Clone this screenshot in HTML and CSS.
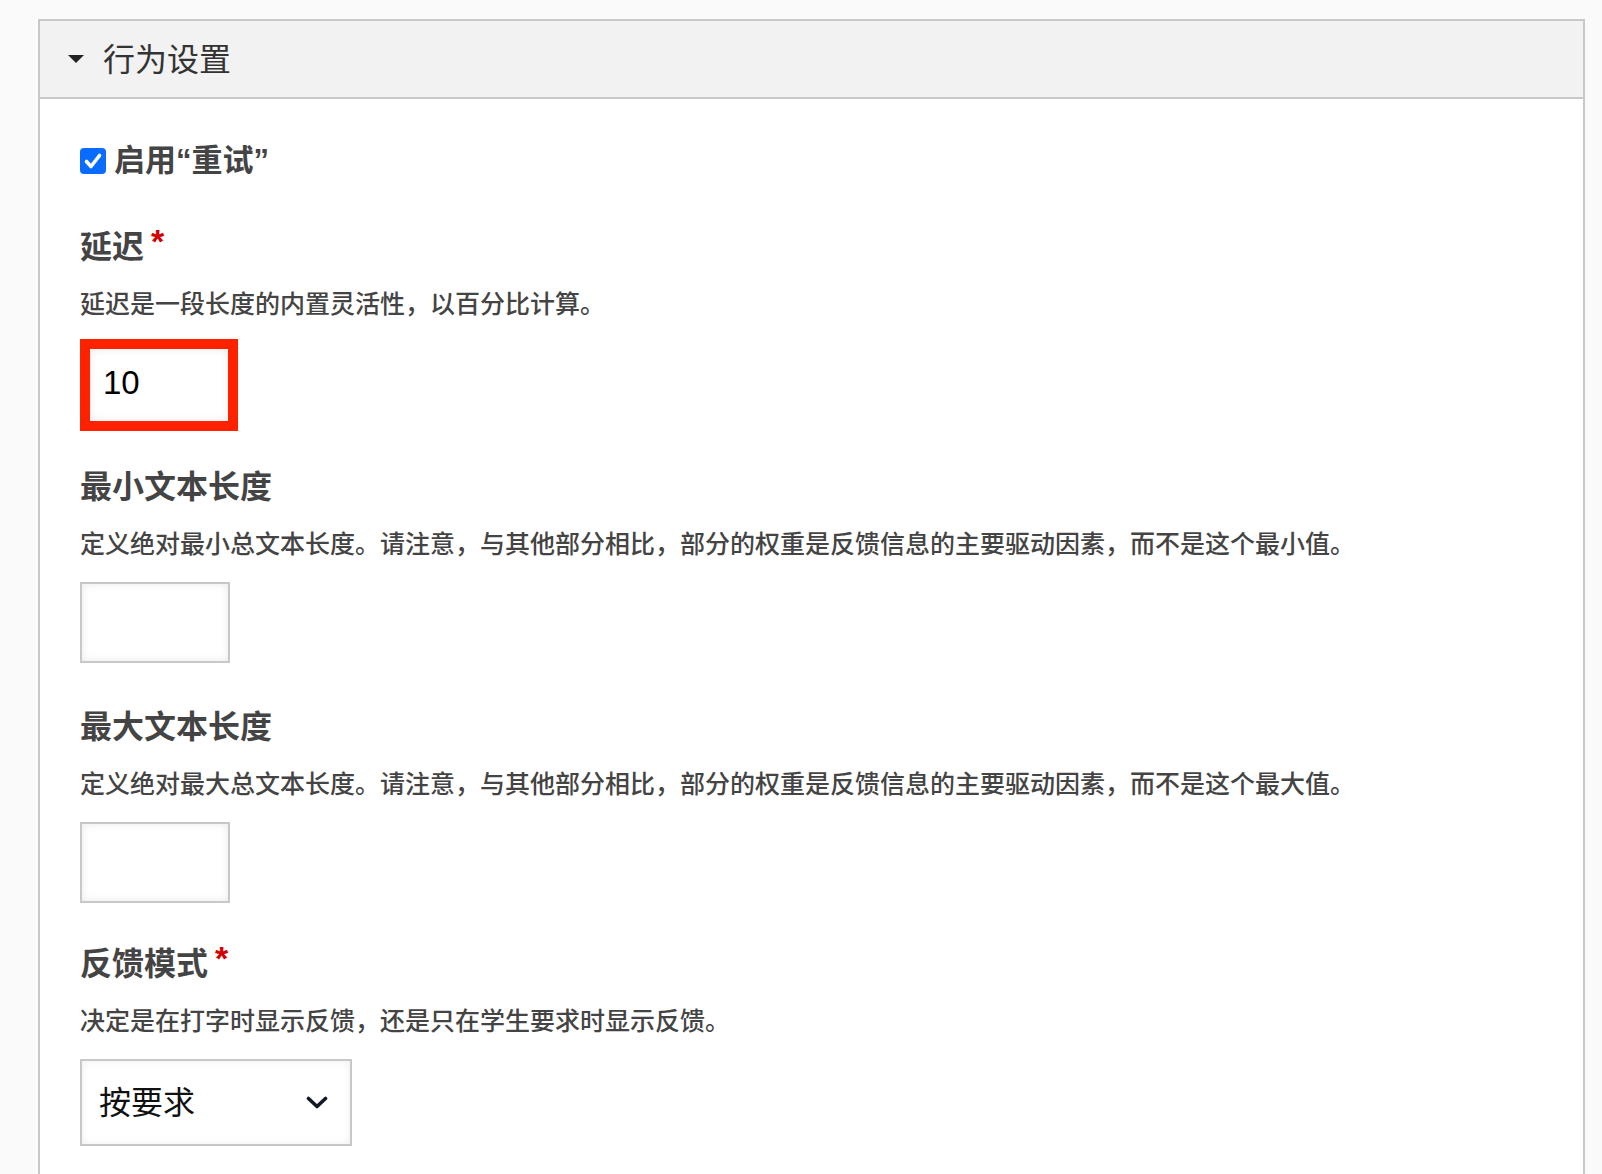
FILE: index.html
```html
<!DOCTYPE html>
<html lang="zh-CN">
<head>
<meta charset="utf-8">
<title>行为设置</title>
<link rel="stylesheet" href="styles.css">
</head>
<body>
<section class="panel">
  <header class="panel-header">
    <span class="caret"></span>
    <h2 class="panel-title">行为设置</h2>
  </header>
  <div class="panel-body">
    <div class="check-row">
      <span class="checkbox">
        <svg width="26" height="26" viewBox="0 0 26 26"><polyline points="6.5,13.5 11,18.5 19.5,7.5" fill="none" stroke="#fff" stroke-width="3.6" stroke-linecap="round" stroke-linejoin="round"/></svg>
      </span>
      <span class="check-label">启用“重试”</span>
    </div>

    <div class="field field-first">
      <div class="field-label">延迟<span class="req">*</span></div>
      <div class="field-desc">延迟是一段长度的内置灵活性，以百分比计算。</div>
      <input class="text-input highlighted" type="text" value="10">
    </div>

    <div class="field field-after-highlight">
      <div class="field-label">最小文本长度</div>
      <div class="field-desc">定义绝对最小总文本长度。请注意，与其他部分相比，部分的权重是反馈信息的主要驱动因素，而不是这个最小值。</div>
      <input class="text-input" type="text" value="">
    </div>

    <div class="field">
      <div class="field-label">最大文本长度</div>
      <div class="field-desc">定义绝对最大总文本长度。请注意，与其他部分相比，部分的权重是反馈信息的主要驱动因素，而不是这个最大值。</div>
      <input class="text-input" type="text" value="">
    </div>

    <div class="field field-last">
      <div class="field-label">反馈模式<span class="req">*</span></div>
      <div class="field-desc">决定是在打字时显示反馈，还是只在学生要求时显示反馈。</div>
      <div class="select">
        <span class="select-value">按要求</span>
        <svg class="chevron" width="22" height="14" viewBox="0 0 22 14"><polyline points="2.5,2.5 11,10.5 19.5,2.5" fill="none" stroke="#111827" stroke-width="3.6" stroke-linecap="round" stroke-linejoin="round"/></svg>
      </div>
    </div>
  </div>
</section>
</body>
</html>
```

FILE: styles.css
```css
html, body {
  margin: 0;
  padding: 0;
  overflow: hidden;
}

body {
  background: #fafafa;
  font-family: "Liberation Sans", "Noto Sans CJK SC", sans-serif;
  color: #444;
}

.panel {
  margin: 19px 0 0 38px;
  width: 1547px;
  min-height: 1155px;
  box-sizing: border-box;
  border: 2px solid #c8c8c8;
  border-bottom: none;
  background: #fff;
}

.panel-header {
  display: flex;
  align-items: center;
  gap: 19px;
  height: 76px;
  padding-left: 28px;
  background: #f2f2f2;
  border-bottom: 2px solid #c8c8c8;
}

.caret {
  width: 0;
  height: 0;
  border-left: 8px solid transparent;
  border-right: 8px solid transparent;
  border-top: 8px solid #222;
}

.panel-title {
  margin: 2px 0 0 0;
  font-size: 32px;
  font-weight: 400;
  line-height: 40px;
  color: #333;
}

.panel-body {
  padding: 42px 40px 0 40px;
}

.check-row {
  display: flex;
  align-items: center;
  gap: 8px;
  height: 40px;
}

.checkbox {
  display: block;
  width: 26px;
  height: 26px;
  border-radius: 4px;
  background: #0a6cff;
}

.checkbox svg {
  display: block;
}

.check-label {
  font-size: 31px;
  font-weight: 700;
  line-height: 40px;
  color: #444;
}

.field {
  margin-top: 44px;
}

.field-first {
  margin-top: 45px;
}

.field-after-highlight {
  margin-top: 36px;
}

.field-last {
  margin-top: 40px;
}

.field-label {
  font-size: 32px;
  font-weight: 700;
  line-height: 40px;
  color: #444;
}

.req {
  display: inline-block;
  margin-left: 7px;
  font-size: 34px;
  font-weight: 700;
  color: #d40000;
  vertical-align: 5px;
  line-height: 30px;
}

.field-desc {
  margin-top: 21px;
  font-size: 25px;
  font-weight: 500;
  line-height: 32px;
  color: #444;
}

.text-input {
  display: block;
  margin-top: 22px;
  width: 150px;
  height: 81px;
  box-sizing: border-box;
  border: 2px solid #c8c8c8;
  border-radius: 0;
  background: #fff;
  box-shadow: inset 0 0 9px rgba(0, 0, 0, 0.09);
  padding: 0 0 0 13px;
  font-family: "Liberation Sans", "Noto Sans CJK SC", sans-serif;
  font-size: 33px;
  color: #000;
  outline: none;
}

.text-input.highlighted {
  margin-top: 19px;
  width: 158px;
  height: 92px;
  border: 10px solid #ff2200;
  padding-left: 13px;
  padding-bottom: 4px;
}

.select {
  display: flex;
  align-items: center;
  justify-content: space-between;
  margin-top: 22px;
  width: 272px;
  height: 87px;
  box-sizing: border-box;
  border: 2px solid #c8c8c8;
  background: #fff;
  box-shadow: inset 0 0 9px rgba(0, 0, 0, 0.07);
  padding: 0 22px 0 17px;
}

.select-value {
  font-size: 32px;
  line-height: 40px;
  color: #111;
}

.chevron {
  display: block;
}
```
